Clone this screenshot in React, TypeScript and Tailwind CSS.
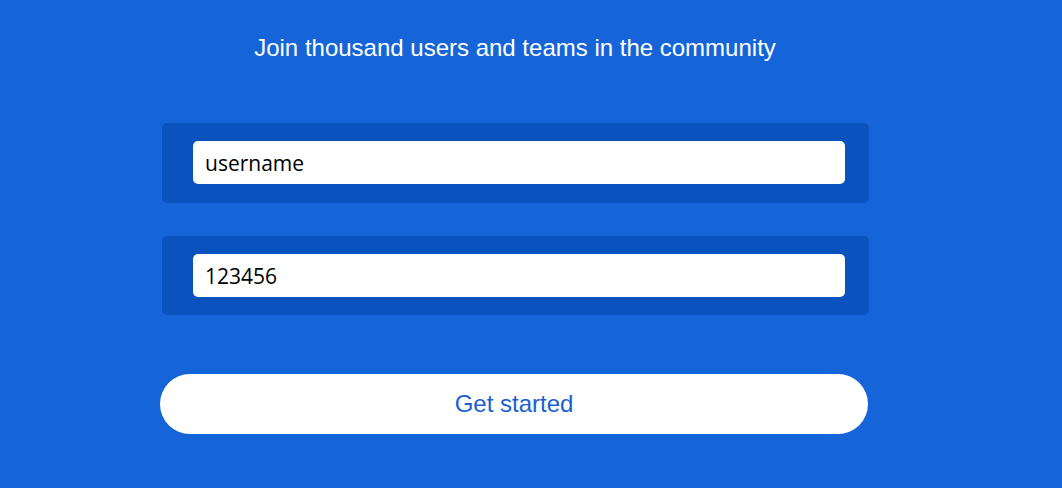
export default function App() {
  return (
    <div className="min-h-[488px] w-full bg-[#1565d8] font-['Liberation_Sans',Arial,sans-serif]">
      <div className="ml-[160px] flex w-[710px] flex-col pt-[34px]">
        <h1 className="text-center text-[24px] leading-[28px] text-white">
          Join thousand users and teams in the community
        </h1>
        <div className="mt-[61px] flex flex-col gap-[33px] pl-[2px] pr-[1px]">
          <div className="rounded-[5px] bg-[#0a53be] pb-[19px] pl-[31px] pr-[24px] pt-[18px]">
            <input
              defaultValue="username"
              className="h-[43px] w-full rounded-[5px] bg-white px-[12px] font-['Open_Sans',sans-serif] text-[21px] text-black outline-none"
            />
          </div>
          <div className="rounded-[5px] bg-[#0a53be] pb-[18px] pl-[31px] pr-[24px] pt-[18px]">
            <input
              defaultValue="123456"
              className="h-[43px] w-full rounded-[5px] bg-white px-[12px] font-['Open_Sans',sans-serif] text-[21px] text-black outline-none"
            />
          </div>
        </div>
        <button className="mt-[59px] h-[60px] w-[708px] rounded-full bg-white text-[24px] text-[#1a5fd0]">
          Get started
        </button>
      </div>
    </div>
  );
}
